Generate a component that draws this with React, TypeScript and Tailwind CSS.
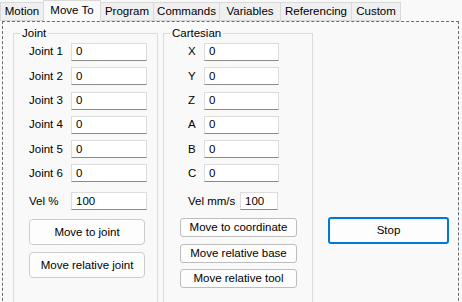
const TABS = [
  { label: "Motion", w: "w-[44px]" },
  { label: "Move To", w: "w-[58px]", active: true },
  { label: "Program", w: "w-[54px]" },
  { label: "Commands", w: "w-[67px]" },
  { label: "Variables", w: "w-[62px]" },
  { label: "Referencing", w: "w-[72px]" },
  { label: "Custom", w: "w-[50px]" },
];

const JOINTS = ["Joint 1", "Joint 2", "Joint 3", "Joint 4", "Joint 5", "Joint 6"];
const AXES = ["X", "Y", "Z", "A", "B", "C"];

function TextBox({ value, className }: { value: string; className: string }) {
  return (
    <div
      className={`h-[18px] flex items-center pl-[4px] bg-white border border-[#dcdcdc] border-b-[#8a8a8a] ${className}`}
    >
      {value}
    </div>
  );
}

function GroupBox({ title, className, children }: { title: string; className: string; children: React.ReactNode }) {
  return (
    <fieldset className={`border border-[#dcdcdc] h-[300px] ${className}`}>
      <legend className="ml-[6px] px-[2px] leading-[14px]">{title}</legend>
      {children}
    </fieldset>
  );
}

export default function App() {
  return (
    <div
      className="w-[462px] h-[302px] overflow-hidden bg-[#f9f9f9] text-[11.5px] text-black"
      style={{ fontFamily: '"Liberation Sans", Arial, sans-serif' }}
    >
      {/* Tabs */}
      <div className="flex items-end h-[21px]">
        {TABS.map((t) =>
          t.active ? (
            <div
              key={t.label}
              className={`${t.w} h-[21px] -ml-px border border-b-0 border-[#d9d9d9] bg-[#f9f9f9] flex justify-center pt-[1px] relative z-10`}
            >
              {t.label}
            </div>
          ) : (
            <div
              key={t.label}
              className={`${t.w} h-[19px] -ml-px first:ml-0 border border-[#d9d9d9] bg-[#f0f0f0] flex items-center justify-center`}
            >
              {t.label}
            </div>
          )
        )}
      </div>

      {/* Tab page */}
      <div className="ml-[2px] mr-[3px] h-[300px] border border-dashed border-[#6b6b6b] pl-[10px] pt-[4px] flex items-start">
        <GroupBox title="Joint" className="w-[145px]">
          <div className="flex flex-col gap-[6.3px] pt-[3px] pl-[15px]">
            {JOINTS.map((j) => (
              <div key={j} className="flex items-center">
                <span className="w-[42px]">{j}</span>
                <TextBox value="0" className="w-[76px]" />
              </div>
            ))}
          </div>
          <div className="flex items-center pl-[15px] mt-[10px]">
            <span className="w-[42px]">Vel %</span>
            <TextBox value="100" className="w-[76px]" />
          </div>
          <div className="flex flex-col gap-[7px] pl-[15px] mt-[9px]">
            <button className="w-[116px] h-[26px] rounded-[4px] border border-[#cccccc] bg-[#fdfdfd]">Move to joint</button>
            <button className="w-[116px] h-[26px] rounded-[4px] border border-[#cccccc] bg-[#fdfdfd]">Move relative joint</button>
          </div>
        </GroupBox>

        <GroupBox title="Cartesian" className="w-[150px] ml-[5px]">
          <div className="flex flex-col gap-[6.3px] pt-[3px] pl-[24px]">
            {AXES.map((a) => (
              <div key={a} className="flex items-center">
                <span className="w-[16px]">{a}</span>
                <TextBox value="0" className="w-[75px]" />
              </div>
            ))}
          </div>
          <div className="flex items-center pl-[24px] mt-[10px]">
            <span className="w-[52px]">Vel mm/s</span>
            <TextBox value="100" className="w-[38px]" />
          </div>
          <div className="flex flex-col gap-[6.5px] pl-[16px] mt-[8px]">
            <button className="w-[117px] h-[19px] rounded-[3px] border border-[#bdbdbd] bg-[#fdfdfd] leading-none">Move to coordinate</button>
            <button className="w-[117px] h-[19px] rounded-[3px] border border-[#bdbdbd] bg-[#fdfdfd] leading-none">Move relative base</button>
            <button className="w-[117px] h-[19px] rounded-[3px] border border-[#bdbdbd] bg-[#fdfdfd] leading-none">Move relative tool</button>
          </div>
        </GroupBox>

        <button className="ml-[15px] mt-[191px] w-[121px] h-[27px] rounded-[3px] border-2 border-[#0078d7] bg-[#fdfdfd]">
          Stop
        </button>
      </div>
    </div>
  );
}
